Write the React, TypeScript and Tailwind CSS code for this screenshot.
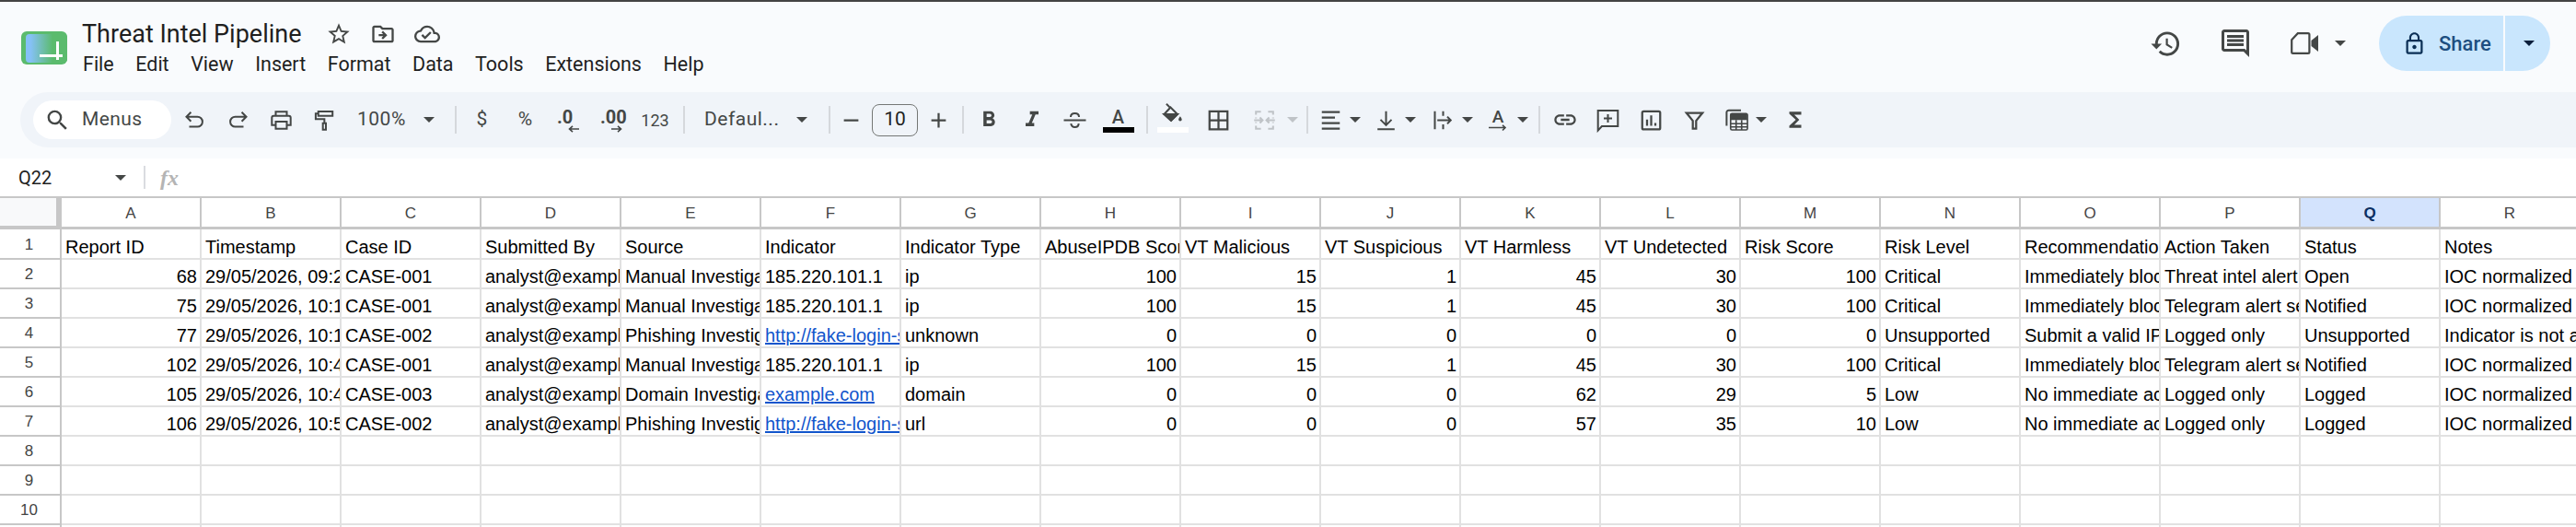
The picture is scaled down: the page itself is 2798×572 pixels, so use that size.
import type { ReactNode } from 'react'
import {
  MdAdd,
  MdFormatBold,
  MdFormatItalic,
  MdFunctions,
  MdHistory,
  MdLink,
  MdLockOutline,
  MdOutlineCloudDone,
  MdOutlineComment,
  MdOutlineDriveFileMove,
  MdOutlineStarBorder,
  MdRemove,
  MdSearch,
} from 'react-icons/md'

const INK = '#444746'

const Caret = ({ color = INK }: { color?: string }) => (
  <svg viewBox="0 0 12 6" className="h-[6px] w-[12px] shrink-0">
    <path d="M0 0H12L6 6Z" fill={color} />
  </svg>
)

const Glyph = ({ children, stroke = INK }: { children: ReactNode; stroke?: string }) => (
  <svg viewBox="0 0 18 18" fill="none" stroke={stroke} strokeWidth="1.35" className="h-[27px] w-[27px] shrink-0">
    {children}
  </svg>
)

const Cell = ({ className, children }: { className: string; children: ReactNode }) => (
  <div className={`flex h-[42px] shrink-0 items-center justify-center ${className}`}>{children}</div>
)

const Sep = ({ className }: { className: string }) => (
  <div className={`h-[30px] w-[2px] shrink-0 bg-[#d5d8dc] ${className}`} />
)

const Drop = () => (
  <Cell className="w-[14px]">
    <Caret />
  </Cell>
)

const Arrow = ({ left, className }: { left?: boolean; className: string }) => (
  <svg viewBox="0 0 12 8" fill="none" stroke={INK} strokeWidth="1.6" className={`h-[8px] w-[12px] ${className}`}>
    {left ? <path d="M12 4H1.5M5 .8 1.5 4 5 7.2" /> : <path d="M0 4H10.5M7 .8 10.5 4 7 7.2" />}
  </svg>
)

const Toolbar = () => (
  <div className="flex h-[60px] items-center overflow-hidden rounded-l-[30px] bg-[#f0f4f9] pl-[14px] font-['Roboto',sans-serif] text-[#444746]">
    <div className="flex h-[42px] w-[150px] shrink-0 items-center rounded-full bg-white pl-[12px] text-[21px]">
      <MdSearch size={29} color={INK} />
      <span className="ml-[12px] tracking-[0.4px]">Menus</span>
    </div>
    <div className="w-[2px] shrink-0" />
    <Cell className="w-[47px]">
      <Glyph>
        <path d="M6.3 3.2 3 6.5l3.3 3.3M3 6.5h8a3.6 3.6 0 0 1 0 7.2H5" />
      </Glyph>
    </Cell>
    <Cell className="w-[47px]">
      <Glyph>
        <path d="M11.7 3.2 15 6.5l-3.3 3.3M15 6.5H7a3.6 3.6 0 0 0 0 7.2h6" />
      </Glyph>
    </Cell>
    <Cell className="w-[47px]">
      <Glyph>
        <path d="M5 6V2.8h8V6M5 12.5H2.2V7.2a1.3 1.3 0 0 1 1.3-1.3h11a1.3 1.3 0 0 1 1.3 1.3v5.3H13M5 10h8v5.2H5Z" />
      </Glyph>
    </Cell>
    <Cell className="w-[47px]">
      <Glyph>
        <path d="M4.5 2.6h10.3v3.2H4.5ZM4.5 4.2H2.6v4h6.3v3M7.8 11.2h2.2v4.6H7.8Z" />
      </Glyph>
    </Cell>
    <Cell className="w-[106px] justify-start pl-[12px] text-[21px]">
      <span className="w-[72px] tracking-[0.5px]">100%</span>
      <Caret />
    </Cell>
    <Sep className="ml-[12px]" />
    <Cell className="ml-[4px] w-[47px] text-[21px]">$</Cell>
    <Cell className="w-[47px] text-[21px]">%</Cell>
    <Cell className="w-[47px]">
      <div className="flex w-[25px] flex-col pt-[2px]">
        <span className="text-[20px] leading-[17px] font-bold">.0</span>
        <Arrow left className="ml-[12px]" />
      </div>
    </Cell>
    <Cell className="w-[47px]">
      <div className="flex w-[25px] flex-col pt-[2px]">
        <span className="text-[20px] leading-[17px] font-bold">.00</span>
        <Arrow className="ml-[12px]" />
      </div>
    </Cell>
    <Cell className="w-[47px] text-[18px]">123</Cell>
    <Sep className="ml-[7px]" />
    <Cell className="w-[144px] justify-start pl-[21px] text-[21px]">
      <span className="w-[100px] tracking-[0.5px]">Defaul...</span>
      <Caret />
    </Cell>
    <Sep className="ml-[12px]" />
    <Cell className="w-[45px]">
      <MdRemove size={27} color={INK} />
    </Cell>
    <div className="flex h-[35px] w-[50px] shrink-0 items-center justify-center rounded-[8px] border border-[#747775] text-[21px] text-[#1f1f1f]">
      10
    </div>
    <Cell className="w-[44px]">
      <MdAdd size={27} color={INK} />
    </Cell>
    <Sep className="ml-[4px]" />
    <Cell className="ml-[3px] w-[47px]">
      <MdFormatBold size={28} color={INK} />
    </Cell>
    <Cell className="w-[47px]">
      <MdFormatItalic size={28} color={INK} />
    </Cell>
    <Cell className="w-[47px]">
      <Glyph>
        <path d="M1 9h16M6 6.7C6 5 7.3 4 9 4s3 1 3 2.7M6.2 11.4C6.4 13 7.5 14 9 14s2.7-1 2.8-2.6" />
      </Glyph>
    </Cell>
    <div className="mt-[-6px] flex w-[47px] shrink-0 flex-col items-center self-start pt-[22px]">
      <span className="text-[20px] leading-[22px] font-medium">A</span>
      <div className="h-[6px] w-[34px] bg-black" />
    </div>
    <Sep className="ml-[7px]" />
    <div className="ml-[3px] flex w-[47px] shrink-0 flex-col items-center self-start pt-[11px]">
      <Glyph>
        <path d="M4.6 1.2 7.8 4.4M7.6 3.7 12.6 8.7 8 13.2 3 8.7Z" />
        <path d="M3 8.7H12.6L8 13.2Z" fill={INK} />
        <path d="M14.6 10.2c.7 1 1.2 1.7 1.2 2.3a1.2 1.2 0 0 1-2.4 0c0-.6.5-1.3 1.2-2.3Z" fill={INK} stroke="none" />
      </Glyph>
      <div className="h-[6px] w-[34px] bg-white" />
    </div>
    <Cell className="ml-[3px] w-[47px]">
      <Glyph>
        <path strokeWidth="1.5" d="M2.5 2.5h13v13h-13ZM9 2.5v13M2.5 9h13" />
      </Glyph>
    </Cell>
    <Cell className="ml-[3px] w-[47px]">
      <Glyph stroke="#bfc3c7">
        <path d="M2.8 5V2.8h3.6M2.8 7v.6M2.8 10.4v.6M2.8 13v2.2h3.6M15.2 5V2.8h-3.6M15.2 7v.6M15.2 10.4v.6M15.2 13v2.2h-3.6M1.5 9h6M5.6 7l2 2-2 2M16.5 9h-6M12.4 7l-2 2 2 2" />
      </Glyph>
    </Cell>
    <Cell className="w-[14px]">
      <Caret color="#bfc3c7" />
    </Cell>
    <Sep className="ml-[8px]" />
    <Cell className="ml-[4px] w-[40px]">
      <Glyph>
        <path strokeWidth="1.5" d="M2.5 3h13M2.5 7h9.5M2.5 11h13M2.5 15h13" />
      </Glyph>
    </Cell>
    <Drop />
    <Cell className="ml-[6px] w-[40px]">
      <Glyph>
        <path d="M9 2.5v10M5 8.6l4 4 4-4M2.8 15.5h12.4" />
      </Glyph>
    </Cell>
    <Drop />
    <Cell className="ml-[8px] w-[40px]">
      <Glyph>
        <path d="M3 2.5v13M9 2.5v3.4M9 12v3.5M4.8 9h9.7M12 6.4 14.5 9 12 11.6" />
      </Glyph>
    </Cell>
    <Drop />
    <Cell className="ml-[6px] w-[40px]">
      <div className="flex w-[20px] flex-col items-center">
        <span className="text-[19px] leading-[17px] font-medium">A</span>
        <svg viewBox="0 0 20 8" fill="none" stroke={INK} strokeWidth="1.6" className="h-[8px] w-[20px]">
          <path d="M0 3.5H18M15 .8 18 3.5 15 6.5" />
        </svg>
      </div>
    </Cell>
    <Drop />
    <Sep className="ml-[10px]" />
    <Cell className="ml-[3px] w-[47px]">
      <MdLink size={28} color={INK} />
    </Cell>
    <Cell className="w-[47px]">
      <Glyph>
        <path d="M1.8 2h14.4v11.4H4.6l-2.8 3Z" />
        <path d="M9 4.6v6M6 7.6h6" />
      </Glyph>
    </Cell>
    <Cell className="w-[47px]">
      <Glyph>
        <path strokeWidth="1.5" d="M3.5 2.6h11a1 1 0 0 1 1 1v11a1 1 0 0 1-1 1h-11a1 1 0 0 1-1-1v-11a1 1 0 0 1 1-1ZM6 8.5v4.5M9 5.5v7.5M12 11v2" />
      </Glyph>
    </Cell>
    <Cell className="w-[47px]">
      <Glyph>
        <path strokeWidth="1.5" d="M3.2 3.7h11.6L10.2 9.4v5.6H7.8V9.4Z" />
      </Glyph>
    </Cell>
    <Cell className="ml-[2px] w-[40px]">
      <Glyph>
        <path d="M1.6 13V3.4A1.6 1.6 0 0 1 3.2 1.8H12" />
        <path strokeWidth="1.1" d="M4.5 5.2a1 1 0 0 1 1-1h10.2a1 1 0 0 1 1 1V15a1 1 0 0 1-1 1H5.5a1 1 0 0 1-1-1ZM4.5 11.5h12M4.5 13.8h12M8.5 8.8V16M12.5 8.8V16" />
        <path d="M4.5 4.4h12v4.4h-12Z" fill={INK} stroke="none" />
      </Glyph>
    </Cell>
    <Drop />
    <Cell className="ml-[6px] w-[47px]">
      <MdFunctions size={26} color={INK} />
    </Cell>
  </div>
)

const Header = () => (
  <div className="flex h-[170px] shrink-0 flex-col bg-[#f9fbfd] font-['Roboto',sans-serif]">
    <div className="flex h-[98px] shrink-0">
      <svg viewBox="0 0 50 36" className="mt-[32px] ml-[23px] h-[36px] w-[50px] shrink-0">
        <defs>
          <linearGradient id="logoFade" x1="0" x2="1" y1="0" y2="0">
            <stop offset="0" stopColor="#85c1f5" />
            <stop offset="0.12" stopColor="#85c1f5" />
            <stop offset="0.65" stopColor="#5bbb6d" />
          </linearGradient>
        </defs>
        <rect width="50" height="36" rx="6" fill="#5bbb6d" />
        <rect x="5" y="3" width="45" height="31" rx="4" fill="url(#logoFade)" />
        <path d="M20 25h25v3H20ZM38 11h3v20h-3Z" fill="#fff" />
      </svg>
      <div className="ml-[16px] flex shrink-0 flex-col">
        <div className="mt-[17px] flex h-[36px] items-center">
          <span className="text-[27px] text-[#1f1f1f]">Threat Intel Pipeline</span>
          <div className="ml-[26px] flex items-center gap-[20px]">
            <MdOutlineStarBorder size={28} color={INK} />
            <MdOutlineDriveFileMove size={28} color={INK} />
            <MdOutlineCloudDone size={28} color={INK} />
          </div>
        </div>
        <div className="flex gap-[23.5px] pl-[1px] text-[21.5px] leading-[30px] text-[#1f1f1f]">
          {['File', 'Edit', 'View', 'Insert', 'Format', 'Data', 'Tools', 'Extensions', 'Help'].map(m => (
            <span key={m}>{m}</span>
          ))}
        </div>
      </div>
      <div className="mt-[15px] mr-[28px] ml-auto flex h-[60px] items-center">
        <MdHistory size={35} color={INK} />
        <div className="ml-[40px]">
          <MdOutlineComment size={36} color={INK} />
        </div>
        <svg viewBox="0 0 30 24" className="ml-[42px] h-[24px] w-[30px]">
          <path d="M1.2 8.2 7.8 1.2H19a1.4 1.4 0 0 1 1.4 1.4v18.8a1.4 1.4 0 0 1-1.4 1.4H2.6a1.4 1.4 0 0 1-1.4-1.4Z" fill="none" stroke={INK} strokeWidth="2.2" />
          <path d="M22.5 9 30 3v18l-7.5-6Z" fill={INK} />
        </svg>
        <div className="ml-[18px]">
          <Caret />
        </div>
        <div className="ml-[36px] flex h-[60px] w-[135px] items-center rounded-l-full bg-[#c9e6fd] pl-[25px]">
          <MdLockOutline size={27} color="#0b2f55" />
          <span className="ml-[13px] text-[22px] font-medium text-[#1d4e80]">Share</span>
        </div>
        <div className="ml-[2px] flex h-[60px] w-[49px] items-center rounded-r-full bg-[#c9e6fd] pl-[20px]">
          <Caret color="#0a1f3c" />
        </div>
      </div>
    </div>
    <div className="pl-[22px]">
      <Toolbar />
    </div>
  </div>
)

const FormulaBar = () => (
  <div className="flex h-[41px] shrink-0 items-center bg-white font-['Roboto',sans-serif]">
    <span className="w-[125px] pl-[20px] text-[20px] text-[#1f1f1f]">Q22</span>
    <Caret />
    <div className="ml-[19px] h-[25px] w-[2px] bg-[#dadce0]" />
    <span className="ml-[16px] font-['Liberation_Serif',serif] text-[24px] font-bold text-[#b4b4b4] italic">fx</span>
  </div>
)

const COLUMNS = 'ABCDEFGHIJKLMNOPQR'.split('')

type Row = [number, string, string, string, string, string, string, number, number, number, number, number, number, string, string, string, string, string]

const ANALYST = 'analyst@example.com'
const BLOCK = 'Immediately block this indicator'
const CLEAN = 'No immediate action required'
const IOC = 'IOC normalized'

const ROWS: Row[] = [
  [68, '29/05/2026, 09:24:10', 'CASE-001', ANALYST, 'Manual Investigation', '185.220.101.1', 'ip', 100, 15, 1, 45, 30, 100, 'Critical', BLOCK, 'Threat intel alert', 'Open', IOC],
  [75, '29/05/2026, 10:12:33', 'CASE-001', ANALYST, 'Manual Investigation', '185.220.101.1', 'ip', 100, 15, 1, 45, 30, 100, 'Critical', BLOCK, 'Telegram alert sent', 'Notified', IOC],
  [77, '29/05/2026, 10:18:02', 'CASE-002', ANALYST, 'Phishing Investigation', 'http://fake-login-secure.com', 'unknown', 0, 0, 0, 0, 0, 0, 'Unsupported', 'Submit a valid IP', 'Logged only', 'Unsupported', 'Indicator is not a'],
  [102, '29/05/2026, 10:41:27', 'CASE-001', ANALYST, 'Manual Investigation', '185.220.101.1', 'ip', 100, 15, 1, 45, 30, 100, 'Critical', BLOCK, 'Telegram alert sent', 'Notified', IOC],
  [105, '29/05/2026, 10:47:51', 'CASE-003', ANALYST, 'Domain Investigation', 'example.com', 'domain', 0, 0, 0, 62, 29, 5, 'Low', CLEAN, 'Logged only', 'Logged', IOC],
  [106, '29/05/2026, 10:53:16', 'CASE-002', ANALYST, 'Phishing Investigation', 'http://fake-login-secure.com', 'url', 0, 0, 0, 57, 35, 10, 'Low', CLEAN, 'Logged only', 'Logged', IOC],
]

const TITLES = ['Report ID', 'Timestamp', 'Case ID', 'Submitted By', 'Source', 'Indicator', 'Indicator Type', 'AbuseIPDB Score', 'VT Malicious', 'VT Suspicious', 'VT Harmless', 'VT Undetected', 'Risk Score', 'Risk Level', 'Recommendation', 'Action Taken', 'Status', 'Notes']

const RowNumber = ({ n }: { n: number }) => (
  <div className="flex w-[67px] shrink-0 items-center justify-center border-r-2 border-b-2 border-[#c7c7c7] pt-[1px] pr-[2px] text-[17px] text-[#444]">
    {n}
  </div>
)

const DataCell = ({ value }: { value: string | number | null }) => {
  const numeric = typeof value === 'number'
  const link = typeof value === 'string' && (value.startsWith('http') || value === 'example.com')
  return (
    <div
      className={`flex w-[152px] shrink-0 items-end overflow-hidden border-r-2 border-b-2 border-[#e1e1e1] whitespace-nowrap ${numeric ? 'justify-end pr-[3px]' : 'pl-[4px]'}`}
    >
      {link ? <span className="text-[#1155cc] underline">{value}</span> : <span>{value}</span>}
    </div>
  )
}

const SheetRow = ({ n, values, height }: { n: number; values: (string | number | null)[]; height: string }) => (
  <div className={`flex ${height} shrink-0`}>
    <RowNumber n={n} />
    {values.map((v, i) => (
      <DataCell key={i} value={v} />
    ))}
  </div>
)

const Grid = () => (
  <div className="font-['Liberation_Sans',Arial,sans-serif] text-[20px] leading-[23px] text-black">
    <div className="flex h-[36px] shrink-0 border-t-2 border-[#c7c7c7]">
      <div className="h-full w-[67px] shrink-0 border-r-[6px] border-b-4 border-[#c7c7c7] bg-[#f8f9fa]" />
      {COLUMNS.map(c => (
        <div
          key={c}
          className={`flex w-[152px] shrink-0 items-center justify-center border-r-2 border-b-[3px] border-[#c7c7c7] pt-[2px] text-[17px] ${c === 'Q' ? 'bg-[#d3e3fd] font-bold text-[#0b2f62]' : 'text-[#444]'}`}
        >
          {c}
        </div>
      ))}
    </div>
    <SheetRow n={1} values={TITLES} height="h-[33px]" />
    {ROWS.map((r, i) => (
      <SheetRow key={r[0]} n={i + 2} values={r} height="h-[32px]" />
    ))}
    {[8, 9, 10, 11].map(n => (
      <SheetRow key={n} n={n} values={COLUMNS.map(() => null)} height="h-[32px]" />
    ))}
  </div>
)

export default function App() {
  return (
    <div className="flex h-[572px] w-[2798px] flex-col overflow-hidden bg-white">
      <div className="h-[2px] shrink-0 bg-[#444]" />
      <Header />
      <FormulaBar />
      <Grid />
    </div>
  )
}
